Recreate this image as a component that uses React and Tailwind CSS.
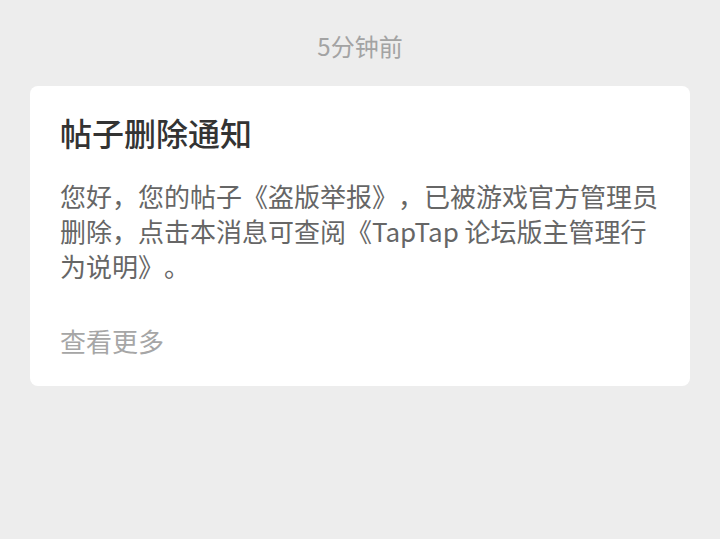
export default function App() {
  return (
    <div
      className="min-h-[539px] bg-[#ededed] pt-[31px]"
      style={{ fontFamily: '"Noto Sans CJK SC", "Noto Sans", sans-serif' }}
    >
      <div className="text-center text-[24px] leading-[30px] text-[#a3a3a3]">5分钟前</div>

      <div className="mx-[30px] mt-[25px] rounded-[8px] bg-white px-[30px] pt-[28px] pb-[28px]">
        <h1 className="text-[32px] font-medium leading-[36px] text-[#333333]">帖子删除通知</h1>
        <p className="mt-[28px] text-[26px] leading-[35px] text-[#666666] [text-spacing-trim:space-all]">
          您好，您的帖子《盗版举报》，已被游戏官方管理员删除，点击本消息可查阅《TapTap 论坛版主管理行为说明》。
        </p>
        <div className="mt-[40px] text-[26px] leading-[35px] text-[#a6a6a6]">查看更多</div>
      </div>
    </div>
  );
}
